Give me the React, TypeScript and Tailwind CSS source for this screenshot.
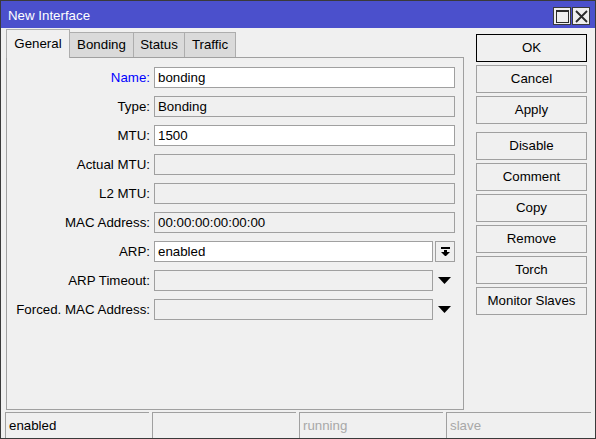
import React from "react";

type Row = {
  label: string;
  value: string;
  kind: "edit" | "ro" | "select" | "drop";
  blue?: boolean;
};

const rows: Row[] = [
  { label: "Name:", value: "bonding", kind: "edit", blue: true },
  { label: "Type:", value: "Bonding", kind: "ro" },
  { label: "MTU:", value: "1500", kind: "edit" },
  { label: "Actual MTU:", value: "", kind: "ro" },
  { label: "L2 MTU:", value: "", kind: "ro" },
  { label: "MAC Address:", value: "00:00:00:00:00:00", kind: "ro" },
  { label: "ARP:", value: "enabled", kind: "select" },
  { label: "ARP Timeout:", value: "", kind: "drop" },
  { label: "Forced. MAC Address:", value: "", kind: "drop" },
];

const tabs = [
  { label: "General", w: "w-[64px]", active: true },
  { label: "Bonding", w: "w-[64px]" },
  { label: "Status", w: "w-[51px]" },
  { label: "Traffic", w: "w-[51px]" },
];

const buttons = ["OK", "Cancel", "Apply", "Disable", "Comment", "Copy", "Remove", "Torch", "Monitor Slaves"];

function Field({ row }: { row: Row }) {
  const box = (w: string, white: boolean) => (
    <div
      className={`${w} h-[21px] border border-[#a0a0a0] flex items-center pl-[3px] ${white ? "bg-white" : "bg-[#f0f0f0]"}`}
    >
      {row.value}
    </div>
  );
  if (row.kind === "select") {
    return (
      <div className="flex gap-[2px]">
        {box("w-[279px]", true)}
        <div className="w-[20px] h-[21px] border border-[#a0a0a0] bg-[#f0f0f0] flex items-center justify-center">
          <svg width="9" height="9" viewBox="0 0 9 9">
            <rect x="0" y="0" width="9" height="2" fill="#000" />
            <rect x="3" y="3" width="3" height="2" fill="#000" />
            <polygon points="0,5 9,5 4.5,9.5" fill="#000" />
          </svg>
        </div>
      </div>
    );
  }
  if (row.kind === "drop") {
    return (
      <div className="flex items-center">
        {box("w-[279px]", false)}
        <svg className="ml-[5px]" width="13" height="7" viewBox="0 0 13 7">
          <polygon points="0,0 13,0 6.5,7" fill="#000" />
        </svg>
      </div>
    );
  }
  return box("w-[301px]", row.kind === "edit");
}

export default function App() {
  return (
    <div
      className="w-[596px] h-[439px] bg-[#f0f0f0] border border-[#3a3a3a] flex flex-col text-[13.3px] text-black"
      style={{ fontFamily: '"Liberation Sans", Arial, sans-serif' }}
    >
      <div className="h-[27px] bg-[#4b50cc] flex items-center justify-between pl-[7px] pr-[5px] text-white">
        <span className="pt-[3px]">New Interface</span>
        <div className="flex gap-[1px] pt-[3px]">
          <div className="w-[18px] h-[18px] border border-[#3a3a3a] bg-[#eeeeee] flex items-center justify-center">
            <svg width="13" height="13" viewBox="0 0 13 13">
              <rect x="0.5" y="0.5" width="12" height="12" fill="none" stroke="#2a2a2a" strokeWidth="1" />
              <rect x="0" y="0" width="13" height="2" fill="#2a2a2a" />
            </svg>
          </div>
          <div className="w-[18px] h-[18px] border border-[#3a3a3a] bg-[#eeeeee] flex items-center justify-center">
            <svg width="13" height="13" viewBox="0 0 13 13">
              <path d="M1 1 L12 12 M12 1 L1 12" stroke="#2a2a2a" strokeWidth="1.8" />
            </svg>
          </div>
        </div>
      </div>

      <div className="flex h-[382px]">
        <div className="ml-[5px] flex flex-col">
          <div className="flex items-end h-[29px] relative z-10">
            {tabs.map((t, i) => (
              <div
                key={t.label}
                className={`${t.w} flex items-center justify-center border-t border-r border-[#adadad] ${
                  i === 0 ? "border-l" : ""
                } ${t.active ? "h-[29px] bg-[#f0f0f0] -mb-px" : "h-[25px] bg-[#dadada]"}`}
              >
                {t.label}
              </div>
            ))}
          </div>
          <div className="w-[458px] h-[353px] border border-[#a0a0a0] flex flex-col pt-[9px] gap-[8px]">
            {rows.map((r) => (
              <div key={r.label} className="flex items-center h-[21px]">
                <div className={`w-[143px] text-right ${r.blue ? "text-[#0000ff]" : ""}`}>{r.label}</div>
                <div className="ml-[4px]">
                  <Field row={r} />
                </div>
              </div>
            ))}
          </div>
        </div>

        <div className="ml-[12px] mt-[6px] flex flex-col gap-[3px]">
          {buttons.map((b) => (
            <div
              key={b}
              className={`w-[111px] h-[28px] flex items-center justify-center bg-[#f0f0f0] border ${
                b === "OK" ? "border-black" : "border-[#a0a0a0]"
              } ${b === "Disable" ? "mt-[5px]" : ""}`}
            >
              {b}
            </div>
          ))}
        </div>
      </div>

      <div className="mt-[2px] h-[26px] flex gap-[3px] pl-[4px] pr-[4px]">
        {["enabled", "", "running", "slave"].map((s, i) => (
          <div
            key={i}
            className={`${i === 3 ? "flex-1" : "w-[144px]"} border-t border-l border-[#a0a0a0] flex items-center pl-[3px] ${
              i >= 2 ? "text-[#a8a8a8]" : ""
            }`}
          >
            {s}
          </div>
        ))}
      </div>
    </div>
  );
}
